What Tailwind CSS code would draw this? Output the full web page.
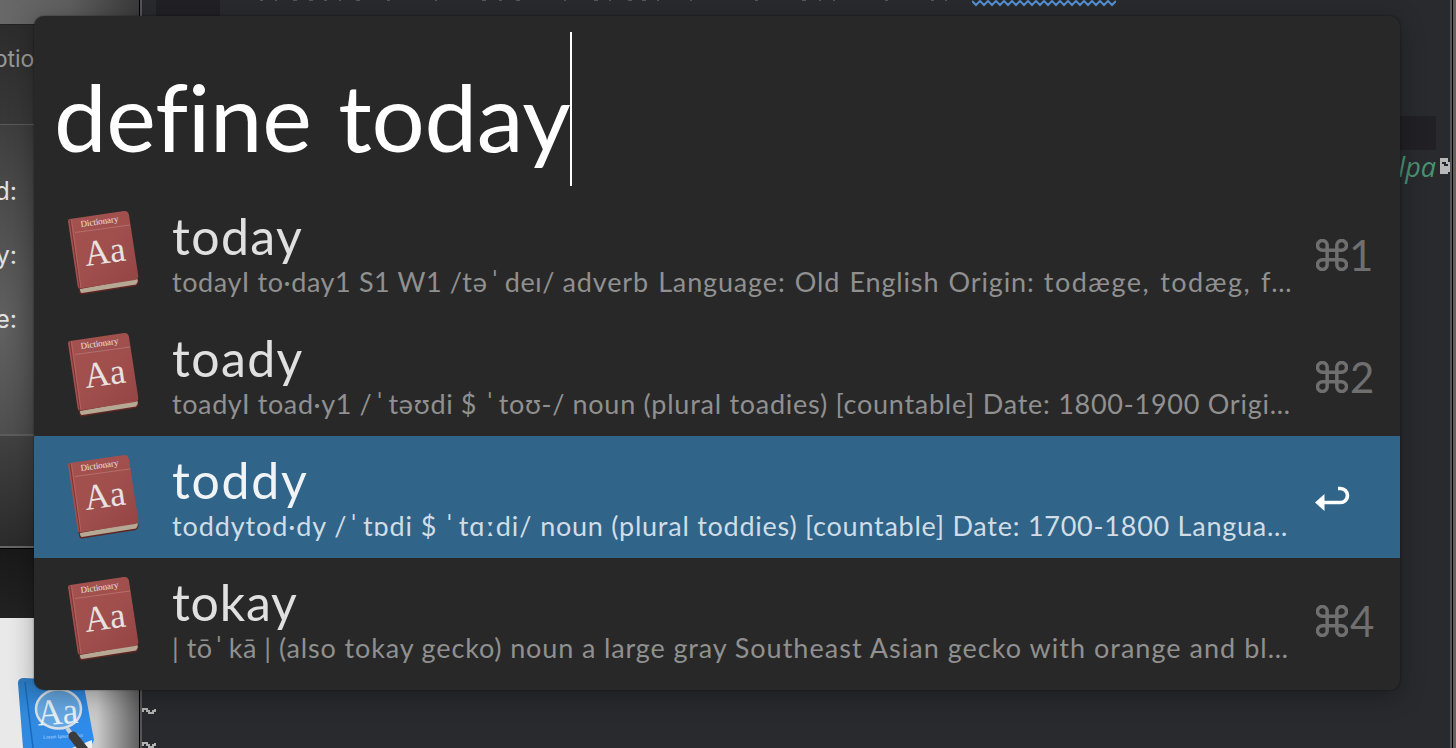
<!DOCTYPE html>
<html lang="en">
<head>
<meta charset="utf-8">
<title>define today</title>
<script src="https://cdn.jsdelivr.net/npm/@tailwindcss/browser@4"></script>
</head>
<body class="h-[748px] w-[1456px] overflow-hidden bg-[#292a2e] font-[Lato,sans-serif]">
<main class="relative h-[748px] w-[1456px] overflow-hidden">
  <!-- desktop: preferences window, terminal, sliver of a third window -->
  <div class="flex h-full">
    <section class="flex w-[139px] flex-col">
      <div class="h-[25px] border-b border-[#222] bg-linear-to-r from-[#686868] via-[#5f5f5f] to-[#3a3a3a]"></div>
      <div class="flex h-[100px] items-start justify-end border-b border-[#5a5a5a] bg-linear-to-b from-[#2c2c2c] to-[#383838] pt-[17px] pr-[91px] font-[Inter] text-[23px] whitespace-nowrap text-[#999]"><span>ption</span></div>
      <div class="flex h-[311px] flex-col items-end border-b-2 border-[#5c5c5c] bg-[radial-gradient(110px_260px_at_0_65%,#616161,#343434)] pt-[48px] pr-[122px] font-[Inter] text-[25px] text-[#e2e2e2]">
        <span class="h-16">d:</span><span class="h-16">y:</span><span>e:</span>
      </div>
      <div class="h-[112px] border-b-2 border-[#666] bg-linear-to-b from-[#414141] to-[#2b2b2b]"></div>
      <div class="h-[70px] border-t border-black bg-linear-to-b from-[#191919] to-[#222]"></div>
      <div class="relative flex-1 bg-linear-to-r from-[#e9e9e9] from-20% via-[#c9c9c9] via-70% to-[#606060]">
        <svg class="absolute top-[58px] left-[14px] h-[74px] w-[84px]" viewBox="14 676 84 74">
          <defs><linearGradient id="blue" x2="1" y2="1"><stop stop-color="#2a77b8"/><stop offset=".3" stop-color="#3389dc"/><stop offset="1" stop-color="#2d8cf0"/></linearGradient></defs>
          <path d="M18 683Q18 678 24 678L83 681L94 740L90 748H23Z" fill="url(#blue)"/>
          <path d="M25 682L33 748" stroke="#1769ba" stroke-width="1.500"/>
          <path d="M72 748L92 740V748Z" fill="#eee"/>
          <text x="43" y="738" font-size="5" font-family="Liberation Serif" fill="#b9dcff" transform="rotate(-3 58 735)">Lorem Ipsum Dolor</text>
          <ellipse cx="58.500" cy="709" rx="22.500" ry="19.500" fill="#8fbfe4" fill-opacity=".55" stroke="#d9e0e6" stroke-width="2.500"/>
          <text x="37" y="724" font-size="37" textLength="41" lengthAdjust="spacingAndGlyphs" font-family="Liberation Serif" fill="#e6eff7" transform="rotate(-4 58 712)">Aa</text>
          <path d="M67 728L72 735" stroke="#ccd0d6" stroke-width="4"/><path d="M73 736L84 750" stroke="#3b3b3b" stroke-width="9" stroke-linecap="round"/>
        </svg>
      </div>
    </section>
    <div class="w-[3px] border-l border-black bg-[#555]"></div>
    <section class="relative w-[1308px] overflow-hidden bg-[#292a2e]">
      <div class="absolute top-0 left-[14px] h-8 w-16 bg-[#212025]"></div>
      <svg class="absolute top-0 left-0 h-px w-[830px]" viewBox="142 0 830 1"><path d="M260 .5h3M275 .5h2M293 .5h4M309 .5h4M324 .5h3M339 .5h2M356 .5h4M387 .5h3M435 .5h2M482 .5h4M499 .5h3M516 .5h4M564 .5h2M594 .5h4M609 .5h2M628 .5h4M642 .5h4M657 .5h2M690 .5h2M755 .5h3M802 .5h4M819 .5h2M833 .5h2M885 .5h3M931 .5h3M945 .5h2" stroke="#55565a" stroke-width="1"/></svg>
      <svg class="absolute top-0 left-[830px] h-2 w-[144px]" viewBox="0 0 144 8"><path d="M0 0l4 4 4-4 4 4 4-4 4 4 4-4 4 4 4-4 4 4 4-4 4 4 4-4 4 4 4-4 4 4 4-4 4 4 4-4 4 4 4-4 4 4 4-4 4 4 4-4 4 4 4-4 4 4 4-4 4 4 4-4 4 4 4-4 4 4 4-4 4 4 4-4" transform="translate(0 1)" fill="none" stroke="#5590d0" stroke-width="2"/></svg>
      <div class="absolute top-[116px] right-[14px] h-[34px] w-[100px] bg-[#212025]"></div>
      <div class="absolute top-[149px] right-[14px] font-['Open_Sans'] text-[27px] leading-9 font-medium text-[#489373] italic">lpa</div>
      <svg class="absolute top-[158px] right-0 h-4 w-[10px]" viewBox="0 0 10 16"><path d="M0 0H8V4H10V16H0Z" fill="#b8b8b8"/><path d="M2 4H6V6H8V8H4V6H2ZM8 14H10V16H8Z" fill="#26262a"/></svg>
      <svg class="absolute top-[706px] -left-[1px] h-[42px] w-4" viewBox="0 0 16 42" fill="none" stroke="#b2b2b2" stroke-width="2"><path d="M0 5H2V3H6V5H8V7H12V5H14V3M0 39H2V37H6V39H8V41H12V39H14V37"/></svg>
    </section>
    <div class="flex-1 border-l-2 border-[#55565a] bg-[#65615e]"><div class="h-full w-px bg-black"></div></div>
  </div>

  <!-- launcher window -->
  <section class="absolute top-4 left-[34px] flex h-[674px] w-[1366px] flex-col overflow-hidden rounded-[10px] bg-[#282828] shadow-[0_6px_26px_rgba(0,0,0,.3),0_0_2px_rgba(0,0,0,.5)]">
    <header class="flex h-44 items-start pt-4 pl-5">
      <h1 class="w-[516px] pt-[14px] text-[94px] leading-[140px] tracking-[-0.3px] whitespace-nowrap text-white [word-spacing:3px]">define today</h1>
      <div class="h-[154px] w-[2px] bg-white"></div>
    </header>
    <ul>
      <li class="flex h-[122px]">
        <svg class="mt-4 ml-8 h-[90px] w-[76px] shrink-0" viewBox="66 208 76 90"><use href="#book"/></svg>
        <div class="ml-[30px] w-[1132px] whitespace-nowrap"><h2 class="mt-[14px] text-[50px] leading-[60px] tracking-[1.4px] text-[#e0e0e0]">today</h2><p class="text-[27px] leading-[32px] text-[#909090]"><span class="tracking-[0.6px]">todayI to·day1 S1 W1 /tə<span class="mr-[6px] ml-[4px]">ˈ</span>deɪ/ </span><span class="tracking-[0.85px] [word-spacing:1.5px]">adverb Language: Old English Origin: </span><span class="tracking-[1.5px] [word-spacing:1.5px]">todæge, todæg, f…</span></p></div>
        <div class="mt-[37px] ml-[12px] flex h-[52px] items-center gap-1 text-[42px] text-[#6f6f6f]"><svg class="h-[32px] w-[32px]" viewBox="0 0 33 33"><use href="#cmd"/></svg><span class="-ml-[3px]">1</span></div>
      </li>
      <li class="flex h-[122px]">
        <svg class="mt-4 ml-8 h-[90px] w-[76px] shrink-0" viewBox="66 208 76 90"><use href="#book"/></svg>
        <div class="ml-[30px] w-[1132px] whitespace-nowrap"><h2 class="mt-[14px] text-[50px] leading-[60px] tracking-[1.4px] text-[#e0e0e0]">toady</h2><p class="text-[27px] leading-[32px] text-[#909090]"><span class="tracking-[0.6px]">toadyI toad·y1 /<span class="mr-[5px] ml-[4px]">ˈ</span>təʊdi $ <span class="mr-[5px] ml-[2px]">ˈ</span>toʊ-/ </span><span class="tracking-[0.74px]">noun (plural toadies) [countable] Date: 1800-1900 Origi…</span></p></div>
        <div class="mt-[37px] ml-[12px] flex h-[52px] items-center gap-1 text-[42px] text-[#6f6f6f]"><svg class="h-[32px] w-[32px]" viewBox="0 0 33 33"><use href="#cmd"/></svg><span class="-ml-[2px]">2</span></div>
      </li>
      <li class="flex h-[122px] bg-[#306489]">
        <svg class="mt-4 ml-8 h-[90px] w-[76px] shrink-0" viewBox="66 208 76 90"><use href="#book"/></svg>
        <div class="ml-[30px] w-[1132px] whitespace-nowrap"><h2 class="mt-[14px] text-[50px] leading-[60px] tracking-[1.7px] text-[#f0f4f7]">toddy</h2><p class="text-[27px] leading-[32px] text-[#d1dde6]"><span class="tracking-[0.9px]">toddytod·dy /<span class="mr-[5px] ml-[3px]">ˈ</span>tɒdi $ <span class="mr-[5px] ml-[1px]">ˈ</span>tɑːdi/ </span><span class="tracking-[0.75px]">noun (plural toddies) [countable] Date: 1700-1800 Langua…</span></p></div>
        <svg class="mt-[49px] ml-[11px] h-8 w-9" viewBox="0 0 36 32"><path d="M23 3.500H25.500A7 7 0 0 1 25.500 17.500H9" fill="none" stroke="#fff" stroke-width="3.600"/><path d="M0 17.500L9.500 9V26Z" fill="#fff"/></svg>
      </li>
      <li class="flex h-[122px]">
        <svg class="mt-4 ml-8 h-[90px] w-[76px] shrink-0" viewBox="66 208 76 90"><use href="#book"/></svg>
        <div class="ml-[30px] w-[1132px] whitespace-nowrap"><h2 class="mt-[14px] text-[50px] leading-[60px] tracking-[0.8px] text-[#e0e0e0]">tokay</h2><p class="text-[27px] leading-[32px] text-[#909090]"><span class="tracking-[0.5px]">| tō<span class="mr-[6px] ml-[3px]">ˈ</span>kā | </span><span class="tracking-[0.86px]">(also tokay gecko) noun a large gray </span><span class="tracking-[1.03px]">Southeast Asian gecko with orange and bl…</span></p></div>
        <div class="mt-[37px] ml-[12px] flex h-[52px] items-center gap-1 text-[42px] text-[#6f6f6f]"><svg class="h-[32px] w-[32px]" viewBox="0 0 33 33"><use href="#cmd"/></svg><span class="-ml-[2px]">4</span></div>
      </li>
    </ul>
  </section>

  <svg class="absolute h-0 w-0">
    <defs>
      <linearGradient id="cover" x1="0" y1="0" x2="1" y2="1"><stop stop-color="#a35250"/><stop offset=".5" stop-color="#a04f4d"/><stop offset="1" stop-color="#934543"/></linearGradient>
      <g id="book">
        <path d="M78 288L136 280Q140 279 138 284L136 286L82 294.500Q79 294.500 79 290Z" fill="#5f2523"/>
        <path d="M80 289L137 278.500Q139 281 136 284.500L82 293Q80 293 80 289Z" fill="#b5a894"/>
        <path d="M70 219L124 211Q128 210.500 129 215L138.300 276Q138.500 279.500 135 280L80 288.500Q78 288.500 77.600 286L68 221Q67.800 219.300 70 219Z" fill="url(#cover)"/>
        <path d="M70 219.500L80 288.500" stroke="#7d3533" stroke-width="1"/><path d="M71.500 219.500L81 288" stroke="#bc6a67" stroke-width=".7"/>
        <path d="M75 232.500L130 225" stroke="#bd7b79" stroke-width=".7"/>
        <g font-family="Liberation Serif" fill="#e8e2e0"><text x="81" y="227" font-size="9" textLength="38" transform="rotate(-8 81 227)">Dictionary</text><text x="86" y="266" font-size="36" textLength="41" lengthAdjust="spacingAndGlyphs" transform="rotate(-8 86 266)">Aa</text></g>
      </g>
      <g id="cmd"><path d="M11.500 11.500H21.500V21.500H11.500ZM11.500 11.500H7A5 5 0 1 1 11.500 7ZM21.500 11.500V7A5 5 0 1 1 26 11.500ZM21.500 21.500H26A5 5 0 1 1 21.500 26ZM11.500 21.500V26A5 5 0 1 1 7 21.500Z" fill="none" stroke="#6f6f6f" stroke-width="3.600"/></g>
    </defs>
  </svg>
</main>
</body>
</html>
